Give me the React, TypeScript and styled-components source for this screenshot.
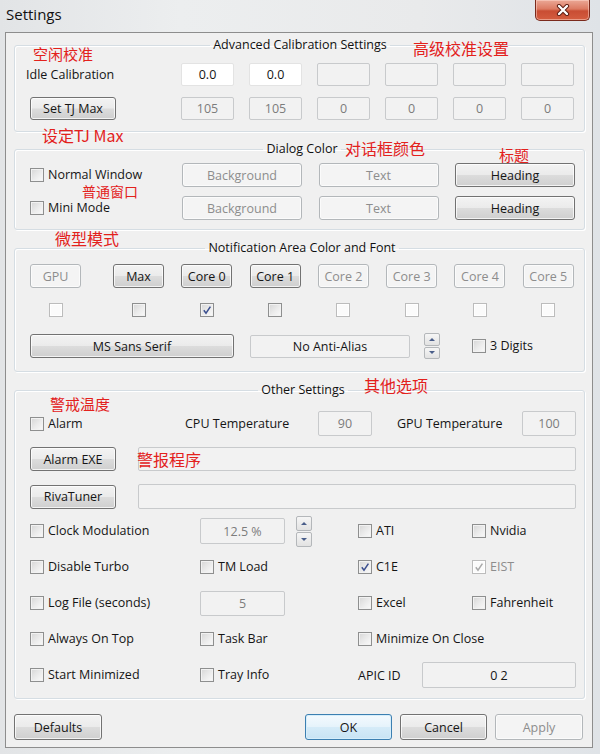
import React from 'react';
import styled, { createGlobalStyle, css } from 'styled-components';

const GlobalStyle = createGlobalStyle`
  html, body {
    margin: 0;
    padding: 0;
  }
  body {
    width: 600px;
    height: 754px;
    overflow: hidden;
    font-family: "Open Sans", "Noto Sans", "Noto Sans CJK SC", sans-serif;
    background: #e6e8ea;
  }
`;

const Window = styled.div`
  position: relative;
  width: 600px;
  height: 754px;
  box-sizing: border-box;
  padding: 0 7px 6px 5px;
  display: flex;
  flex-direction: column;
  background: linear-gradient(90deg, #e2e4e6 0%, #eceeef 30%, #e9eaeb 70%, #dfe3e7 100%);
`;

const TitleBar = styled.div`
  height: 32px;
  display: flex;
  align-items: flex-start;
  justify-content: space-between;
`;

const Title = styled.span`
  margin: 4px 0 0 1px;
  font-family: "Open Sans", "Noto Sans", sans-serif;
  font-size: 15px;
  color: #111;
`;

const CloseButton = styled.div`
  width: 55px;
  height: 21px;
  margin-right: 3px;
  box-sizing: border-box;
  border: 1px solid #7a2a1c;
  border-top: none;
  border-radius: 0 0 5px 5px;
  background: linear-gradient(#eba896 0%, #dc7a62 45%, #c94d33 55%, #d45d40 100%);
  box-shadow: inset 0 0 0 1px rgba(255, 220, 210, 0.5);
  display: flex;
  align-items: center;
  justify-content: center;
`;

const Client = styled.div`
  flex: 1;
  box-sizing: border-box;
  background: #f0f0f0;
  border: 1px solid #8d8d8d;
  padding: 4px 7px 0 8px;
  display: flex;
  flex-direction: column;
`;

const Group = styled.fieldset<{ $mt?: number; $pt: number; $pb: number; $pl: number; $pr?: number }>`
  margin: ${p => p.$mt ?? 0}px 0 0 0;
  padding: ${p => p.$pt}px ${p => p.$pr ?? 10}px ${p => p.$pb}px ${p => p.$pl}px;
  min-width: 0;
  border: 1px solid #d5dde3;
  border-radius: 3px;
  box-shadow: inset 1px 1px 0 #fff, 1px 1px 0 #fff;
`;

const Legend = styled.legend`
  margin: 0 auto;
  padding: 0 3px;
  font-size: 12.5px;
  line-height: 16px;
  color: #111;
`;

const Text = styled.span<{ $muted?: boolean }>`
  font-size: 12.5px;
  color: ${p => (p.$muted ? '#8a8a8a' : '#151515')};
  white-space: nowrap;
`;

const Btn = styled.button<{ $w?: number; $h?: number; $primary?: boolean; $indent?: number }>`
  box-sizing: border-box;
  width: ${p => (p.$w ? `${p.$w}px` : '100%')};
  height: ${p => p.$h ?? 24}px;
  margin: 0 0 0 ${p => p.$indent ?? 0}px;
  padding: 0;
  font-family: inherit;
  font-size: 12.5px;
  color: #151515;
  border: 1px solid #727272;
  border-radius: 3px;
  background: linear-gradient(#f3f3f3 0%, #ebebeb 48%, #dcdcdc 52%, #cfcfcf 100%);
  box-shadow: inset 0 0 0 1px rgba(255, 255, 255, 0.75);
  cursor: default;
  &:disabled {
    border-color: #b3b7ba;
    background: #f4f4f4;
    color: #8d8d8d;
    box-shadow: inset 0 0 0 1px #fbfbfb;
  }
  ${p =>
    p.$primary &&
    css`
      border-color: #3c7fb1;
      background: linear-gradient(#f4fafe 0%, #e6f3fb 48%, #d5ebf8 52%, #c8e3f4 100%);
      box-shadow: inset 0 0 0 1px #d6eefb;
    `}
`;

const Field = styled.div<{ $w?: number; $h?: number; $white?: boolean; $grow?: boolean }>`
  box-sizing: border-box;
  width: ${p => (p.$w ? `${p.$w}px` : p.$grow ? 'auto' : '100%')};
  flex: ${p => (p.$grow ? '1' : 'none')};
  height: ${p => p.$h ?? 24}px;
  border: 1px solid ${p => (p.$white ? '#e3e3e3' : '#c8cacc')};
  border-radius: 2px;
  background: ${p => (p.$white ? '#ffffff' : '#f2f2f2')};
  color: ${p => (p.$white ? '#151515' : '#7c7c7c')};
  font-size: 12.5px;
  display: flex;
  align-items: center;
  justify-content: center;
`;

const CheckItem = styled.label<{ $disabled?: boolean }>`
  display: inline-flex;
  align-items: center;
  gap: 4px;
  font-size: 12.5px;
  line-height: 16px;
  color: ${p => (p.$disabled ? '#8d8d8d' : '#151515')};
  white-space: nowrap;
`;

const Box = styled.span<{ $disabled?: boolean }>`
  box-sizing: border-box;
  width: 14px;
  height: 14px;
  flex: none;
  border: 1px solid ${p => (p.$disabled ? '#bcbcbc' : '#8e8f8f')};
  background: ${p =>
    p.$disabled ? '#fbfbfb' : 'linear-gradient(135deg, #d6d6d6 0%, #ececec 55%, #fafafa 100%)'};
  box-shadow: inset 0 0 0 1px ${p => (p.$disabled ? '#ffffff' : '#f2f2f2')};
  display: flex;
  align-items: center;
  justify-content: center;
`;

const Check = ({
  checked,
  disabled,
  children,
}: {
  checked?: boolean;
  disabled?: boolean;
  children?: React.ReactNode;
}) => (
  <CheckItem $disabled={disabled}>
    <Box $disabled={disabled}>
      {checked && (
        <svg width="10" height="10" viewBox="0 0 10 10">
          <path
            d="M1.8 5.2 L4 8.2 L8.4 1.6"
            fill="none"
            stroke={disabled ? '#a9a9a9' : '#3b4f8f'}
            strokeWidth="1.5"
          />
        </svg>
      )}
    </Box>
    {children}
  </CheckItem>
);

const SpinWrap = styled.div<{ $h: number }>`
  width: 16px;
  height: ${p => p.$h}px;
  display: flex;
  flex-direction: column;
  gap: 1px;
`;

const SpinHalf = styled.div<{ $down?: boolean }>`
  flex: 1;
  box-sizing: border-box;
  border: 1px solid #b4b7ba;
  border-radius: 2px;
  background: linear-gradient(#f6f6f6, #e2e2e2);
  display: flex;
  align-items: center;
  justify-content: center;
  &::after {
    content: '';
    width: 0;
    height: 0;
    border-left: 3px solid transparent;
    border-right: 3px solid transparent;
    ${p =>
      p.$down
        ? css`border-top: 3px solid #4a5e8a;`
        : css`border-bottom: 3px solid #4a5e8a;`}
  }
`;

const Spinner = ({ h }: { h: number }) => (
  <SpinWrap $h={h}>
    <SpinHalf />
    <SpinHalf $down />
  </SpinWrap>
);

/* group 1 */
const CalibGrid = styled.div`
  display: grid;
  grid-template-columns: 140px repeat(6, 53px);
  column-gap: 15px;
  row-gap: 11px;
  align-items: center;
`;

/* group 2 */
const ColorGrid = styled.div`
  display: grid;
  grid-template-columns: 135.5px 120px 120px 120px;
  column-gap: 16.5px;
  row-gap: 9px;
  align-items: center;
`;

/* group 3 */
const SensorRow = styled.div`
  display: grid;
  grid-template-columns: 83px repeat(6, 68.3px) 51px;
`;

const SensorCell = styled.div`
  width: 51px;
  display: flex;
  flex-direction: column;
  align-items: center;
  gap: 15px;
`;

const FontRow = styled.div`
  margin-top: 16px;
  display: flex;
  align-items: center;
`;

const Gap = styled.div<{ $w: number }>`
  width: ${p => p.$w}px;
  flex: none;
`;

/* group 4 */
const AlarmRow = styled.div`
  display: grid;
  grid-template-columns: 155px 133px 54px 25px 125px 54px;
  align-items: center;
`;

const ProgramRow = styled.div<{ $mt: number }>`
  margin-top: ${p => p.$mt}px;
  display: flex;
  align-items: center;
  gap: 22px;
`;

const OptionGrid = styled.div`
  margin-top: 9px;
  display: grid;
  grid-template-columns: 170px 158px 114px 1fr;
  grid-auto-rows: 26px;
  row-gap: 10px;
  align-items: center;
`;

const InlineCell = styled.div<{ $span?: boolean }>`
  display: flex;
  align-items: center;
  gap: 11px;
  grid-column: ${p => (p.$span ? '3 / 5' : 'auto')};
`;

const ApicLabel = styled(Text)`
  width: 53px;
  flex: none;
`;

const Footer = styled.div`
  margin-top: 15px;
  display: flex;
  align-items: center;
`;

const FooterRight = styled.div`
  margin-left: auto;
  margin-right: 2px;
  display: flex;
  gap: 8px;
`;

const Note = styled.span<{ $x: number; $y: number; $size?: number }>`
  position: absolute;
  left: ${p => p.$x}px;
  top: ${p => p.$y}px;
  font-family: "Noto Sans CJK SC", "Open Sans", sans-serif;
  font-size: ${p => p.$size ?? 16}px;
  line-height: 1;
  color: #e3211c;
  white-space: nowrap;
  pointer-events: none;
`;

const sensors = [
  { name: 'GPU', on: false, checked: false },
  { name: 'Max', on: true, checked: false },
  { name: 'Core 0', on: true, checked: true },
  { name: 'Core 1', on: true, checked: false },
  { name: 'Core 2', on: false, checked: false },
  { name: 'Core 3', on: false, checked: false },
  { name: 'Core 4', on: false, checked: false },
  { name: 'Core 5', on: false, checked: false },
];

export default function App() {
  return (
    <>
      <GlobalStyle />
      <Window>
        <TitleBar>
          <Title>Settings</Title>
          <CloseButton aria-label="Close">
            <svg width="16" height="12" viewBox="0 0 16 12">
              <path d="M4 2 L12 10 M12 2 L4 10" stroke="#5a1a10" strokeWidth="4.2" strokeLinecap="round" />
              <path d="M4 2 L12 10 M12 2 L4 10" stroke="#ffffff" strokeWidth="2.4" strokeLinecap="round" />
            </svg>
          </CloseButton>
        </TitleBar>

        <Client>
          <Group $pt={10} $pb={11} $pl={11}>
            <Legend>Advanced Calibration Settings</Legend>
            <CalibGrid>
              <Text>Idle Calibration</Text>
              <Field $h={23} $white>0.0</Field>
              <Field $h={23} $white>0.0</Field>
              <Field $h={23} />
              <Field $h={23} />
              <Field $h={23} />
              <Field $h={23} />
              <Btn $w={86} $h={23} $indent={4}>Set TJ Max</Btn>
              {['105', '105', '0', '0', '0', '0'].map((v, i) => (
                <Field key={i} $h={23}>{v}</Field>
              ))}
            </CalibGrid>
          </Group>

          <Group $mt={9} $pt={6} $pb={9} $pl={15}>
            <Legend>Dialog Color</Legend>
            <ColorGrid>
              <Check>Normal Window</Check>
              <Btn disabled>Background</Btn>
              <Btn disabled>Text</Btn>
              <Btn>Heading</Btn>
              <Check>Mini Mode</Check>
              <Btn disabled>Background</Btn>
              <Btn disabled>Text</Btn>
              <Btn>Heading</Btn>
            </ColorGrid>
          </Group>

          <Group $mt={10} $pt={8} $pb={12} $pl={15}>
            <Legend>Notification Area Color and Font</Legend>
            <SensorRow>
              {sensors.map(s => (
                <SensorCell key={s.name}>
                  <Btn disabled={!s.on}>{s.name}</Btn>
                  <Check checked={s.checked} disabled={!s.on} />
                </SensorCell>
              ))}
            </SensorRow>
            <FontRow>
              <Btn $w={204}>MS Sans Serif</Btn>
              <Gap $w={16} />
              <Field $w={160} $h={23}>
                <Text>No Anti-Alias</Text>
              </Field>
              <Gap $w={14} />
              <Spinner h={26} />
              <Gap $w={32} />
              <Check>3 Digits</Check>
            </FontRow>
          </Group>

          <Group $mt={10} $pt={13} $pb={10} $pl={15} $pr={8}>
            <Legend>Other Settings</Legend>
            <AlarmRow>
              <Check>Alarm</Check>
              <Text>CPU Temperature</Text>
              <Field $h={25}>90</Field>
              <span />
              <Text>GPU Temperature</Text>
              <Field $h={25}>100</Field>
            </AlarmRow>
            <ProgramRow $mt={11}>
              <Btn $w={86}>Alarm EXE</Btn>
              <Field $grow $h={24} />
            </ProgramRow>
            <ProgramRow $mt={13}>
              <Btn $w={86}>RivaTuner</Btn>
              <Field $grow $h={25} />
            </ProgramRow>
            <OptionGrid>
              <Check>Clock Modulation</Check>
              <InlineCell>
                <Field $w={85} $h={26}>12.5 %</Field>
                <Spinner h={31} />
              </InlineCell>
              <Check>ATI</Check>
              <Check>Nvidia</Check>

              <Check>Disable Turbo</Check>
              <Check>TM Load</Check>
              <Check checked>C1E</Check>
              <Check checked disabled>EIST</Check>

              <Check>Log File (seconds)</Check>
              <Field $w={85} $h={25}>5</Field>
              <Check>Excel</Check>
              <Check>Fahrenheit</Check>

              <Check>Always On Top</Check>
              <Check>Task Bar</Check>
              <InlineCell $span>
                <Check>Minimize On Close</Check>
              </InlineCell>

              <Check>Start Minimized</Check>
              <Check>Tray Info</Check>
              <InlineCell $span>
                <ApicLabel>APIC ID</ApicLabel>
                <Field $grow $h={26}>
                  <Text>0 2</Text>
                </Field>
              </InlineCell>
            </OptionGrid>
          </Group>

          <Footer>
            <Btn $w={88} $h={26}>Defaults</Btn>
            <FooterRight>
              <Btn $w={87} $h={26} $primary>OK</Btn>
              <Btn $w={87} $h={26}>Cancel</Btn>
              <Btn $w={88} $h={26} disabled>Apply</Btn>
            </FooterRight>
          </Footer>
        </Client>

        <Note $x={33} $y={46} $size={15}>空闲校准</Note>
        <Note $x={413} $y={40}>高级校准设置</Note>
        <Note $x={42} $y={127}>设定TJ Max</Note>
        <Note $x={345} $y={140}>对话框颜色</Note>
        <Note $x={499} $y={147} $size={15}>标题</Note>
        <Note $x={82} $y={184} $size={14}>普通窗口</Note>
        <Note $x={55} $y={230}>微型模式</Note>
        <Note $x={364} $y={377}>其他选项</Note>
        <Note $x={50} $y={396} $size={15}>警戒温度</Note>
        <Note $x={137} $y={451}>警报程序</Note>
      </Window>
    </>
  );
}
